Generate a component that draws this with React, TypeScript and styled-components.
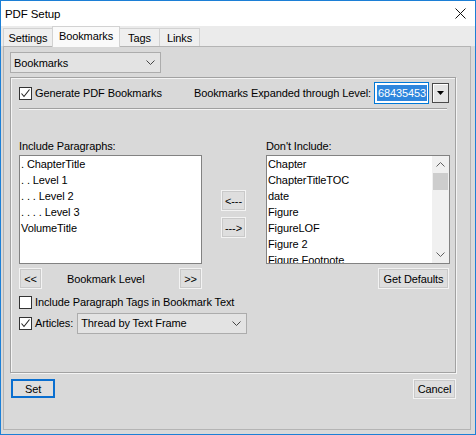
import React from "react";
import styled, { createGlobalStyle } from "styled-components";

const FONT = `"Liberation Sans", Arial, sans-serif`;

const GlobalStyle = createGlobalStyle`
  html, body {
    margin: 0;
    padding: 0;
    background: #ffffff;
  }
  body {
    font-family: ${FONT};
    font-size: 11px;
    letter-spacing: -0.1px;
    color: #000;
  }
  * {
    box-sizing: border-box;
  }
`;

const Window = styled.div`
  width: 476px;
  height: 435px;
  border: 1px solid #1c7fd6;
  background: #d9d9d9;
  display: flex;
  flex-direction: column;
`;

const TitleBar = styled.div`
  height: 25px;
  background: #ffffff;
  display: flex;
  align-items: center;
  justify-content: space-between;
  padding: 0 9px 0 4px;
  font-size: 11.5px;
`;

const TabStrip = styled.div`
  height: 20px;
  background: #ebebeb;
  display: flex;
  align-items: flex-end;
  padding-left: 2px;
`;

const Tab = styled.div<{ $active?: boolean; $w: number }>`
  position: relative;
  z-index: ${(p) => (p.$active ? 1 : 0)};
  width: ${(p) => p.$w}px;
  height: ${(p) => (p.$active ? 21 : 18)}px;
  margin-bottom: ${(p) => (p.$active ? -1 : 0)}px;
  margin-left: -1px;
  background: ${(p) => (p.$active ? "#fafafa" : "#efefef")};
  border: 1px solid #d2d2d2;
  border-bottom: none;
  display: flex;
  align-items: center;
  justify-content: center;
  padding-bottom: ${(p) => (p.$active ? 2 : 0)}px;
  &:first-child {
    margin-left: 0;
  }
`;

const Panel = styled.div`
  flex: 1;
  margin: 0 4px 4px 2px;
  border: 1px solid #b4b4b4;
  background: #d9d9d9;
  padding: 5px 0 0 6px;
  display: flex;
  flex-direction: column;
`;

const Select = styled.div<{ $w: number }>`
  width: ${(p) => p.$w}px;
  height: 21px;
  background: #e3e3e3;
  border: 1px solid #acacac;
  display: flex;
  align-items: center;
  justify-content: space-between;
  padding: 0 5px 0 3px;
`;

const GroupBox = styled.div`
  margin-top: 4px;
  width: 446px;
  height: 296px;
  border: 1px solid #a2a2a2;
  box-shadow: 1px 1px 0 #f4f4f4, inset 1px 1px 0 #f4f4f4;
  padding: 4px 5px 0 8px;
  display: flex;
  flex-direction: column;
`;

const TopRow = styled.div`
  height: 22px;
  display: flex;
  align-items: center;
`;

const CheckLabel = styled.label`
  display: flex;
  align-items: center;
  gap: 3px;
  white-space: nowrap;
`;

const Box = styled.span`
  width: 13px;
  height: 13px;
  border: 1px solid #333333;
  background: #ffffff;
  display: inline-flex;
  align-items: center;
  justify-content: center;
`;

const LevelLabel = styled.span`
  margin-left: auto;
  margin-right: 3px;
  white-space: nowrap;
`;

const LevelInput = styled.div`
  width: 55px;
  height: 22px;
  border: 1px solid #0078d7;
  background: #ffffff;
  padding: 2px 1px 2px 2px;
  display: flex;
`;

const Selected = styled.span`
  flex: 1;
  background: #2f86dd;
  color: #ffffff;
  line-height: 16px;
  padding-left: 1px;
  overflow: hidden;
  white-space: nowrap;
`;

const SpinButton = styled.div`
  width: 17px;
  height: 20px;
  margin: 0 1px 0 3px;
  background: #e4e4e4;
  border: 1px solid #4a4a4a;
  box-shadow: inset 1px 1px 0 #ffffff;
  display: flex;
  align-items: center;
  justify-content: center;
`;

const Separator = styled.div`
  margin: 4px 3px 0 0;
  height: 2px;
  border-top: 1px solid #a0a0a0;
  border-bottom: 1px solid #f4f4f4;
`;

const Lists = styled.div`
  margin-top: 29px;
  display: flex;
`;

const Column = styled.div<{ $w: number }>`
  width: ${(p) => p.$w}px;
  display: flex;
  flex-direction: column;
`;

const FieldLabel = styled.div`
  height: 16px;
  line-height: 14px;
`;

const ListBox = styled.div`
  height: 109px;
  border: 1px solid #828282;
  background: #ffffff;
  display: flex;
  overflow: hidden;
`;

const Items = styled.div`
  flex: 1;
  padding-left: 1px;
  line-height: 16px;
  white-space: nowrap;
  overflow: hidden;
`;

const ScrollBar = styled.div`
  width: 17px;
  background: #f0f0f0;
  display: flex;
  flex-direction: column;
  align-items: center;
`;

const ArrowCell = styled.div`
  width: 17px;
  height: 17px;
  display: flex;
  align-items: center;
  justify-content: center;
`;

const Thumb = styled.div`
  width: 15px;
  height: 17px;
  background: #cdcdcd;
`;

const ScrollTrack = styled.div`
  flex: 1;
  width: 100%;
  display: flex;
  justify-content: center;
`;

const MoveButtons = styled.div`
  width: 25px;
  margin: 0 20px 0 19px;
  padding-top: 51px;
  display: flex;
  flex-direction: column;
  gap: 6px;
`;

const Button = styled.div<{ $w: number; $h?: number; $default?: boolean }>`
  width: ${(p) => p.$w}px;
  height: ${(p) => p.$h ?? 21}px;
  background: #dedede;
  border: 1px solid ${(p) => (p.$default ? "#0a6fd0" : "#f3f3f3")};
  box-shadow: inset 0 0 0 1px ${(p) => (p.$default ? "#0a6fd0" : "#c9c9c9")};
  display: flex;
  align-items: center;
  justify-content: center;
  white-space: nowrap;
`;

const LevelRow = styled.div`
  margin-top: 4px;
  display: flex;
  align-items: center;
`;

const LevelText = styled.span`
  margin-left: 25px;
  margin-right: auto;
`;

const DefaultsRow = styled.div`
  margin-top: 4px;
  display: flex;
  justify-content: flex-end;
  padding-right: 1px;
`;

const OptionRow = styled.div<{ $top: number }>`
  margin-top: ${(p) => p.$top}px;
  height: 20px;
  display: flex;
  align-items: center;
  gap: 4px;
`;

const BottomRow = styled.div`
  margin-top: 6px;
  width: 446px;
  display: flex;
  justify-content: space-between;
  padding-left: 1px;
`;

const Chevron = ({ up = false, color = "#444" }: { up?: boolean; color?: string }) => (
  <svg width="9" height="5" viewBox="0 0 9 5">
    <polyline
      points={up ? "0.5,4.5 4.5,0.5 8.5,4.5" : "0.5,0.5 4.5,4.5 8.5,0.5"}
      fill="none"
      stroke={color}
      strokeWidth="1"
    />
  </svg>
);

const Check = () => (
  <svg width="11" height="11" viewBox="0 0 11 11">
    <polyline points="1.5,5.5 4,8.5 9.5,1.5" fill="none" stroke="#222" strokeWidth="1.1" />
  </svg>
);

const CheckBox = ({ checked }: { checked?: boolean }) => <Box>{checked && <Check />}</Box>;

const include = [". ChapterTitle", ". . Level 1", ". . . Level 2", ". . . . Level 3", "VolumeTitle"];
const exclude = ["Chapter", "ChapterTitleTOC", "date", "Figure", "FigureLOF", "Figure 2", "Figure Footnote"];

export default function App() {
  return (
    <>
      <GlobalStyle />
      <Window>
        <TitleBar>
          <span>PDF Setup</span>
          <svg width="11" height="11" viewBox="0 0 11 11">
            <path d="M0.5 0.5 L10.5 10.5 M10.5 0.5 L0.5 10.5" stroke="#111" strokeWidth="1" />
          </svg>
        </TitleBar>
        <TabStrip>
          <Tab $w={50}>Settings</Tab>
          <Tab $w={68} $active>
            Bookmarks
          </Tab>
          <Tab $w={41}>Tags</Tab>
          <Tab $w={41}>Links</Tab>
        </TabStrip>
        <Panel>
          <Select $w={151}>
            <span>Bookmarks</span>
            <Chevron />
          </Select>
          <GroupBox>
            <TopRow>
              <CheckLabel>
                <CheckBox checked />
                Generate PDF Bookmarks
              </CheckLabel>
              <LevelLabel>Bookmarks Expanded through Level:</LevelLabel>
              <LevelInput>
                <Selected>68435453</Selected>
              </LevelInput>
              <SpinButton>
                <svg width="7" height="4" viewBox="0 0 7 4">
                  <polygon points="0,0 7,0 3.5,4" fill="#000" />
                </svg>
              </SpinButton>
            </TopRow>
            <Separator />
            <Lists>
              <Column $w={183}>
                <FieldLabel>Include Paragraphs:</FieldLabel>
                <ListBox>
                  <Items>
                    {include.map((t) => (
                      <div key={t}>{t}</div>
                    ))}
                  </Items>
                </ListBox>
                <LevelRow>
                  <Button $w={23}>&lt;&lt;</Button>
                  <LevelText>Bookmark Level</LevelText>
                  <Button $w={23}>&gt;&gt;</Button>
                </LevelRow>
              </Column>
              <MoveButtons>
                <Button $w={25}>&lt;---</Button>
                <Button $w={25}>---&gt;</Button>
              </MoveButtons>
              <Column $w={184}>
                <FieldLabel>Don&apos;t Include:</FieldLabel>
                <ListBox>
                  <Items>
                    {exclude.map((t) => (
                      <div key={t}>{t}</div>
                    ))}
                  </Items>
                  <ScrollBar>
                    <ArrowCell>
                      <Chevron up color="#606060" />
                    </ArrowCell>
                    <ScrollTrack>
                      <Thumb />
                    </ScrollTrack>
                    <ArrowCell>
                      <Chevron color="#606060" />
                    </ArrowCell>
                  </ScrollBar>
                </ListBox>
                <DefaultsRow>
                  <Button $w={71}>Get Defaults</Button>
                </DefaultsRow>
              </Column>
            </Lists>
            <OptionRow $top={3}>
              <CheckLabel>
                <CheckBox />
                Include Paragraph Tags in Bookmark Text
              </CheckLabel>
            </OptionRow>
            <OptionRow $top={1}>
              <CheckLabel>
                <CheckBox checked />
                Articles:
              </CheckLabel>
              <Select $w={170}>
                <span>Thread by Text Frame</span>
                <Chevron />
              </Select>
            </OptionRow>
          </GroupBox>
          <BottomRow>
            <Button $w={44} $h={19} $default>
              Set
            </Button>
            <Button $w={43} $h={20}>
              Cancel
            </Button>
          </BottomRow>
        </Panel>
      </Window>
    </>
  );
}
